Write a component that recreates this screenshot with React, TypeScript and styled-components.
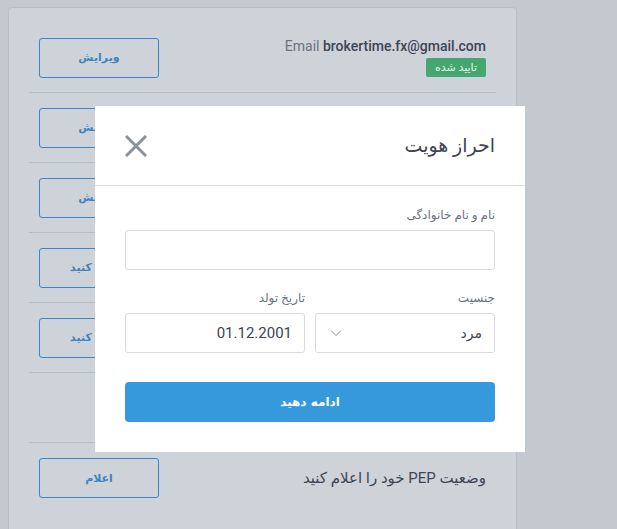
import styled, { createGlobalStyle } from 'styled-components';

const GlobalStyle = createGlobalStyle`
  html, body {
    margin: 0;
    padding: 0;
    background: #c4c8cf;
    font-family: Roboto, "DejaVu Sans", sans-serif;
    overflow: hidden;
  }
`;

// rows 2-6 sit behind the modal, only their buttons peek out
const rows = [
  { label: 'Email', value: 'brokertime.fx@gmail.com', badge: 'تایید شده', action: 'ویرایش' },
  { action: 'ویرایش' },
  { action: 'ویرایش' },
  { action: 'تکمیل کنید' },
  { action: 'تکمیل کنید' },
  {},
] as { label?: string; value?: string; badge?: string; action?: string }[];

const App = () => {
  return (
    <Page dir="rtl">
      <GlobalStyle />
      <Card>
        {rows.map((row, i) => (
          <Row key={i}>
            <Info>
              {row.label && (
                <InfoLine dir="ltr">
                  <Muted>{row.label}</Muted> {row.value}
                </InfoLine>
              )}
              {row.badge && <Badge>{row.badge}</Badge>}
            </Info>
            {row.action && <OutlineBtn>{row.action}</OutlineBtn>}
          </Row>
        ))}
        <Row $last>
          <Info>
            <PlainText>وضعیت PEP خود را اعلام کنید</PlainText>
          </Info>
          <OutlineBtn>اعلام</OutlineBtn>
        </Row>
      </Card>

      <Modal>
        <ModalHeader>
          <Title>احراز هویت</Title>
          <CloseBtn aria-label="close">
            <svg width="22" height="22" viewBox="0 0 22 22">
              <path d="M2 2 L20 20 M20 2 L2 20" stroke="#8b929d" strokeWidth="3" strokeLinecap="square" />
            </svg>
          </CloseBtn>
        </ModalHeader>
        <ModalBody>
          <Field>
            <Label>نام و نام خانوادگی</Label>
            <Input />
          </Field>
          <FieldRow>
            <Field>
              <Label>جنسیت</Label>
              <SelectBox>
                <SelectValue>مرد</SelectValue>
                <svg width="12" height="8" viewBox="0 0 12 8">
                  <path d="M1 1.5 L6 6.5 L11 1.5" fill="none" stroke="#8b929d" strokeWidth="1" />
                </svg>
              </SelectBox>
            </Field>
            <Field>
              <Label>تاریخ تولد</Label>
              <Input defaultValue="01.12.2001" dir="ltr" $alignRight />
            </Field>
          </FieldRow>
          <PrimaryBtn>ادامه دهید</PrimaryBtn>
        </ModalBody>
      </Modal>
    </Page>
  );
};

const Page = styled.div`
  width: 617px;
  height: 529px;
  padding: 7px 0 0 8px;
  box-sizing: border-box;
  display: flex;
  direction: ltr;
  overflow: hidden;
`;
const Card = styled.div`
  direction: rtl;
  width: 509px;
  height: 540px;
  flex-shrink: 0;
  box-sizing: border-box;
  padding: 15px 20px 0;
  background: #ced3d9;
  border: 1px solid #b9bec6;
  border-radius: 4px;
`;
const Row = styled.div<{ $last?: boolean }>`
  height: 70px;
  box-sizing: border-box;
  padding: 0 10px;
  display: flex;
  align-items: center;
  justify-content: space-between;
  border-bottom: ${(p) => (p.$last ? 'none' : '1px solid #b8bdc4')};
`;
const Info = styled.div`
  display: flex;
  flex-direction: column;
  align-items: flex-start;
  gap: 4px;
`;
const InfoLine = styled.div`
  font-size: 14px;
  color: #3d4556;
  font-weight: 500;
`;
const Muted = styled.span`
  color: #6b7282;
  font-weight: 400;
`;
const Badge = styled.span`
  background: #45a66f;
  color: #e6f3ea;
  font-size: 11px;
  padding: 3px 9px;
  border-radius: 2px;
  line-height: 13px;
`;
const PlainText = styled.div`
  font-size: 15px;
  color: #3d4556;
`;
const OutlineBtn = styled.button`
  width: 120px;
  height: 40px;
  background: transparent;
  border: 1px solid #3a86c8;
  border-radius: 3px;
  color: #3d84c2;
  font-family: "DejaVu Sans", sans-serif;
  font-size: 11px;
  font-weight: bold;
`;
const Modal = styled.div`
  position: absolute;
  left: 95px;
  top: 106px;
  width: 430px;
  background: #ffffff;
  direction: rtl;
`;
const ModalHeader = styled.div`
  height: 80px;
  box-sizing: border-box;
  padding: 0 30px;
  display: flex;
  align-items: center;
  justify-content: space-between;
  border-bottom: 1px solid #dcdee2;
`;
const Title = styled.h2`
  margin: 0;
  font-size: 19px;
  font-weight: 400;
  color: #3d4452;
`;
const CloseBtn = styled.button`
  border: 0;
  background: none;
  padding: 0;
  width: 22px;
  height: 22px;
  display: flex;
`;
const ModalBody = styled.div`
  padding: 22px 30px 30px;
  display: flex;
  flex-direction: column;
  gap: 21px;
`;
const Field = styled.div`
  flex: 1;
  min-width: 0;
  display: flex;
  flex-direction: column;
  gap: 7px;
`;
const FieldRow = styled.div`
  display: flex;
  gap: 10px;
`;
const Label = styled.label`
  font-size: 12px;
  line-height: 15px;
  color: #6b7282;
`;
const Input = styled.input<{ $alignRight?: boolean }>`
  width: 100%;
  height: 40px;
  box-sizing: border-box;
  border: 1px solid #d9dbe0;
  border-radius: 3px;
  padding: 0 12px;
  font-family: Roboto, sans-serif;
  font-size: 15px;
  color: #3d4452;
  text-align: ${(p) => (p.$alignRight ? 'right' : 'start')};
  outline: none;
`;
const SelectBox = styled.div`
  height: 40px;
  box-sizing: border-box;
  border: 1px solid #d9dbe0;
  border-radius: 3px;
  padding: 0 12px 0 14px;
  display: flex;
  align-items: center;
  justify-content: space-between;
`;
const SelectValue = styled.span`
  font-size: 14px;
  line-height: 18px;
  color: #3d4452;
`;
const PrimaryBtn = styled.button`
  margin-top: 8px;
  height: 40px;
  border: 0;
  border-radius: 4px;
  background: #3699db;
  color: #ffffff;
  font-family: "DejaVu Sans", sans-serif;
  font-size: 12px;
  font-weight: bold;
`;

export default App;
